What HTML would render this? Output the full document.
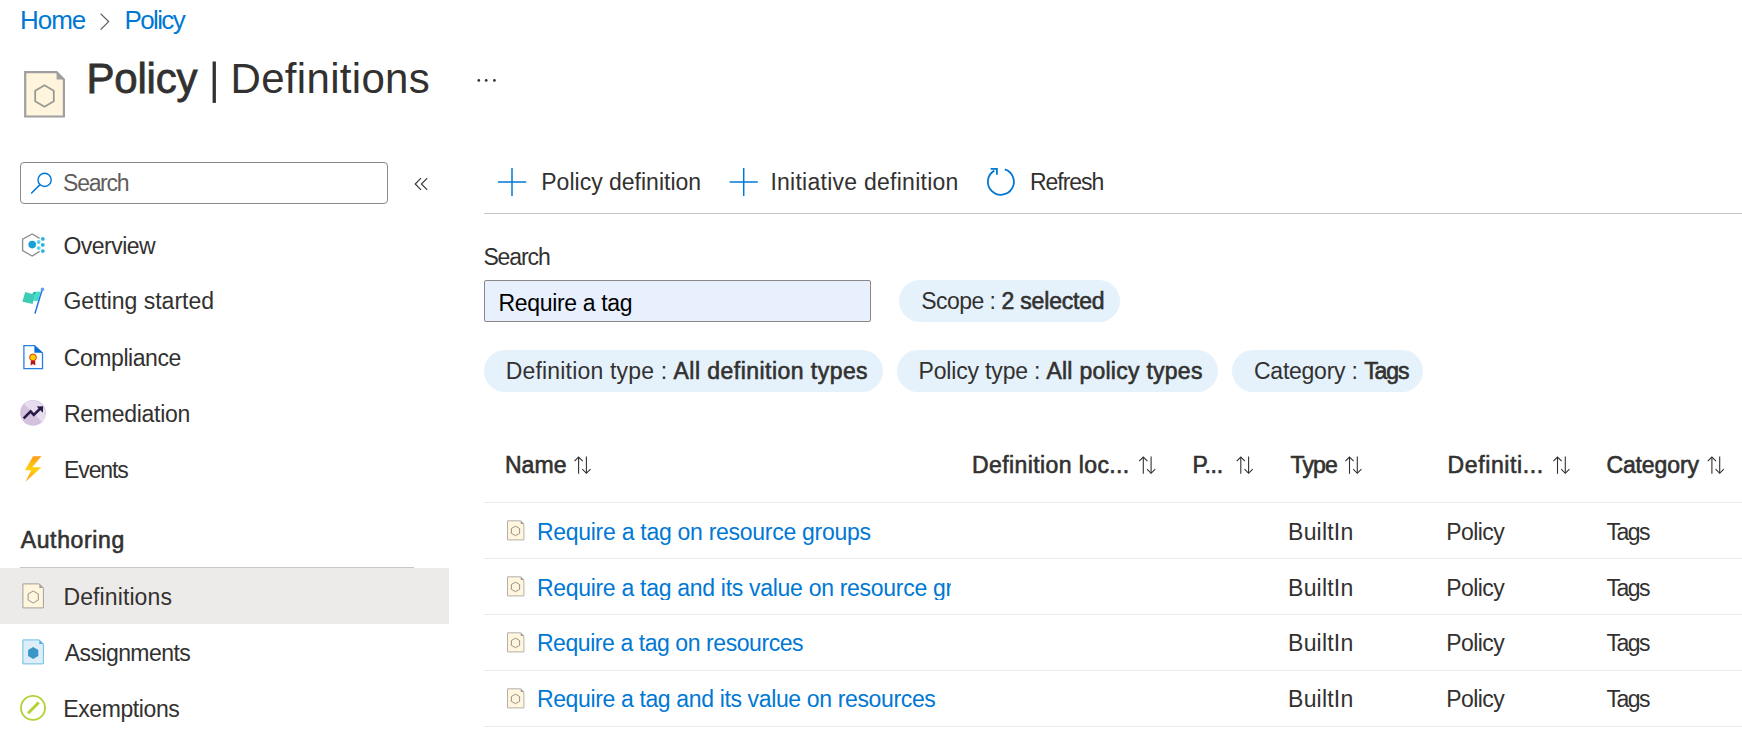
<!DOCTYPE html>
<html><head><meta charset="utf-8"><title>Policy | Definitions</title>
<style>
html,body{margin:0;padding:0;background:#fff;}
body{width:1742px;height:743px;position:relative;overflow:hidden;font-family:"Liberation Sans",sans-serif;}
.t{position:absolute;white-space:nowrap;line-height:1;}
.t b{font-weight:700;}
.a{position:absolute;}
svg{position:absolute;overflow:visible;}
</style></head>
<body>
<!-- breadcrumb chevron -->
<svg style="left:0;top:0" width="1" height="1"><polyline points="100.6,13.6 108.6,21.6 100.6,29.6" fill="none" stroke="#605e5c" stroke-width="1.3"/></svg>
<!-- title pipe + ellipsis -->
<svg style="left:0;top:0" width="1" height="1">
<rect x="212.6" y="61.5" width="3.3" height="41.4" fill="#323130"/>
<circle cx="478.8" cy="80.4" r="1.35" fill="#323130"/><circle cx="486.2" cy="80.4" r="1.35" fill="#323130"/><circle cx="494.4" cy="80.4" r="1.35" fill="#323130"/>
</svg>
<!-- title icon -->
<svg style="left:0;top:0" width="1" height="1">
<path d="M25.2,72.2 H56.6 L63.9,79.5 V116.5 H25.2 Z" fill="#fff5dc" stroke="#9f9f9f" stroke-width="2.2"/>
<path d="M56.6,72.2 L63.9,79.5 H56.6 Z" fill="#9f9f9f"/>
<polygon points="44.5,85.3 53.8,90.7 53.8,101.3 44.5,106.7 35.2,101.3 35.2,90.7" fill="none" stroke="#999896" stroke-width="1.8"/>
</svg>
<!-- sidebar search -->
<div class="a" style="left:20px;top:162px;width:366px;height:40px;border:1px solid #8a8886;border-radius:4px;"></div>
<svg style="left:0;top:0" width="1" height="1">
<circle cx="44.6" cy="179.9" r="6.6" fill="none" stroke="#0078d4" stroke-width="1.4"/>
<line x1="40" y1="184.6" x2="31.6" y2="193" stroke="#0078d4" stroke-width="1.5" stroke-linecap="round"/>
<polyline points="421,178.2 415.2,184 421,189.8" fill="none" stroke="#323130" stroke-width="1.1"/>
<polyline points="427.2,178.2 421.4,184 427.2,189.8" fill="none" stroke="#323130" stroke-width="1.1"/>
</svg>
<!-- selected nav bg + authoring line -->
<div class="a" style="left:0;top:568px;width:449px;height:56px;background:#edebe9"></div>
<div class="a" style="left:20px;top:567px;width:394px;height:1px;background:#c8c6c4"></div>
<!-- overview icon -->
<svg style="left:0;top:0" width="1" height="1">
<polyline points="39.6,238.4 32.2,234 22.6,239.1 22.6,250.6 32.2,256 39.6,251.4" fill="none" stroke="#8f8f8f" stroke-width="1.4"/>
<circle cx="32.2" cy="244.6" r="3.8" fill="#1a9fd6"/>
<circle cx="38.7" cy="242" r="1.9" fill="#50d6f2"/><circle cx="38.7" cy="248.1" r="1.9" fill="#50d6f2"/>
<circle cx="42.8" cy="238.9" r="1.9" fill="#2bb3da"/><circle cx="42.8" cy="244.9" r="1.9" fill="#2bb3da"/><circle cx="42.8" cy="251.1" r="1.9" fill="#2bb3da"/>
</svg>
<!-- getting started flag -->
<svg style="left:0;top:0" width="1" height="1">
<polygon points="32.6,292.4 35.2,291.7 40.6,291.6 38.3,300.9 32.4,300.7" fill="#46dcc6"/>
<polygon points="25.2,292.0 34.1,294.5 32.7,304.0 22.4,301.7" fill="#3ccbb5"/>
<polygon points="33.2,293.9 34.6,292.0 35.6,292.0 34.1,294.6" fill="#2a7d72"/>
<line x1="34.9" y1="313.6" x2="42.2" y2="289.6" stroke="#1f72e0" stroke-width="1.5"/>
<circle cx="42.4" cy="289.4" r="1.8" fill="#5ea3f0"/>
</svg>
<!-- compliance icon -->
<svg style="left:0;top:0" width="1" height="1">
<path d="M23.9,345.6 H34.6 L42.5,353 V368.6 H23.9 Z" fill="#fff" stroke="#2b7de0" stroke-width="1.3"/>
<path d="M34.4,345.4 V352.8 H42.6 Z" fill="#0a6fd6"/>
<path d="M31,359.2 L30.6,365.6 L33,364 L35.4,365.6 L35,359.2 Z" fill="#b01818"/>
<circle cx="33" cy="357.4" r="3.4" fill="#f5d000" stroke="#e8301c" stroke-width="1"/>
</svg>
<!-- remediation icon -->
<svg style="left:0;top:0" width="1" height="1">
<circle cx="33" cy="412.8" r="12.9" fill="#d4c1dd"/>
<path d="M23.9,403.7 A12.9,12.9 0 0 1 42.1,421.9 Z" fill="#e7ddee"/>
<polyline points="23.7,418.4 30.6,411.3 33.8,414.9 39.8,409" fill="none" stroke="#2b1a47" stroke-width="2.6"/>
<polygon points="36.6,406.4 43.1,406.2 42.9,412.7" fill="#2b1a47"/>
</svg>
<!-- events icon -->
<svg style="left:0;top:0" width="1" height="1">
<defs><linearGradient id="gl" x1="0" y1="0" x2="0" y2="1"><stop offset="0" stop-color="#ff9c1a"/><stop offset="0.5" stop-color="#ffd20a"/><stop offset="1" stop-color="#ff9a12"/></linearGradient></defs>
<polygon points="33,456.2 41.4,456.2 32.2,467.2 41.4,467.2 25.5,481.8 31.2,470.2 25,470.2" fill="url(#gl)"/>
</svg>
<!-- definitions nav icon -->
<svg style="left:0;top:0" width="1" height="1">
<path d="M22.9,583.9 H39.3 L43.4,588 V607.9 H22.9 Z" fill="#fff6dd" stroke="#a19f9d" stroke-width="1"/>
<path d="M39.3,583.9 L43.4,588 H39.3 Z" fill="#a19f9d"/>
<polygon points="33.2,591 38.3,594 38.3,600 33.2,603 28.1,600 28.1,594" fill="none" stroke="#8a8886" stroke-width="0.9"/>
</svg>
<!-- assignments icon -->
<svg style="left:0;top:0" width="1" height="1">
<path d="M22.9,639.9 H39.3 L43.4,644 V663.9 H22.9 Z" fill="#ddeef8" stroke="#6bbde2" stroke-width="1"/>
<path d="M39.3,639.9 L43.4,644 H39.3 Z" fill="#4fb0de"/>
<polygon points="33.2,647 38.3,650 38.3,656 33.2,659 28.1,656 28.1,650" fill="#3a96c8"/>
</svg>
<!-- exemptions icon -->
<svg style="left:0;top:0" width="1" height="1">
<circle cx="33" cy="707.9" r="12.0" fill="none" stroke="#b2d235" stroke-width="1.8"/>
<line x1="28.1" y1="713.3" x2="38.7" y2="702.5" stroke="#b2d235" stroke-width="3"/>
</svg>
<!-- toolbar icons -->
<svg style="left:0;top:0" width="1" height="1">
<line x1="497.9" y1="182" x2="526.2" y2="182" stroke="#0078d4" stroke-width="1.5"/>
<line x1="512" y1="168" x2="512" y2="196" stroke="#0078d4" stroke-width="1.5"/>
<line x1="729.6" y1="182" x2="757.8" y2="182" stroke="#0078d4" stroke-width="1.5"/>
<line x1="743.7" y1="168" x2="743.7" y2="196" stroke="#0078d4" stroke-width="1.5"/>
<path d="M1004.8,169.4 A13,13 0 1 1 994.3,170.6" fill="none" stroke="#0078d4" stroke-width="1.8"/>
<polyline points="990.6,168.8 996.9,168.8 996.9,174.8" fill="none" stroke="#0078d4" stroke-width="1.8"/>
</svg>
<div class="a" style="left:484px;top:213px;width:1258px;height:1px;background:#c8c6c4"></div>
<!-- search input + pills -->
<div class="a" style="left:484px;top:280px;width:385px;height:40px;background:#e8f0fe;border:1px solid #8a8886;border-radius:2px;"></div>
<div class="a" style="left:899px;top:280px;width:221px;height:42px;background:#e5f1fb;border-radius:21px;"></div>
<div class="a" style="left:484px;top:350px;width:399px;height:42px;background:#e5f1fb;border-radius:21px;"></div>
<div class="a" style="left:897px;top:350px;width:321px;height:42px;background:#e5f1fb;border-radius:21px;"></div>
<div class="a" style="left:1232px;top:350px;width:191px;height:42px;background:#e5f1fb;border-radius:21px;"></div>
<!-- table lines -->
<div class="a" style="left:484px;top:502px;width:1258px;height:1px;background:#edebe9"></div>
<div class="a" style="left:484px;top:558px;width:1258px;height:1px;background:#edebe9"></div>
<div class="a" style="left:484px;top:614px;width:1258px;height:1px;background:#edebe9"></div>
<div class="a" style="left:484px;top:670px;width:1258px;height:1px;background:#edebe9"></div>
<div class="a" style="left:484px;top:726px;width:1258px;height:1px;background:#edebe9"></div>
<!-- sort icons -->
<svg style="left:0;top:0" width="1" height="1">
<g transform="translate(574.1,456.2)" fill="none" stroke="#323130" stroke-width="1.1"><line x1="4.5" y1="0.8" x2="4.5" y2="17.6"/><polyline points="0.4,4.9 4.5,0.8 8.6,4.9"/><line x1="12.3" y1="0.2" x2="12.3" y2="17"/><polyline points="8.2,13 12.3,17.1 16.4,13"/></g>
<g transform="translate(1138.8,456.2)" fill="none" stroke="#323130" stroke-width="1.1"><line x1="4.5" y1="0.8" x2="4.5" y2="17.6"/><polyline points="0.4,4.9 4.5,0.8 8.6,4.9"/><line x1="12.3" y1="0.2" x2="12.3" y2="17"/><polyline points="8.2,13 12.3,17.1 16.4,13"/></g>
<g transform="translate(1236.3,456.2)" fill="none" stroke="#323130" stroke-width="1.1"><line x1="4.5" y1="0.8" x2="4.5" y2="17.6"/><polyline points="0.4,4.9 4.5,0.8 8.6,4.9"/><line x1="12.3" y1="0.2" x2="12.3" y2="17"/><polyline points="8.2,13 12.3,17.1 16.4,13"/></g>
<g transform="translate(1345,456.2)" fill="none" stroke="#323130" stroke-width="1.1"><line x1="4.5" y1="0.8" x2="4.5" y2="17.6"/><polyline points="0.4,4.9 4.5,0.8 8.6,4.9"/><line x1="12.3" y1="0.2" x2="12.3" y2="17"/><polyline points="8.2,13 12.3,17.1 16.4,13"/></g>
<g transform="translate(1553,456.2)" fill="none" stroke="#323130" stroke-width="1.1"><line x1="4.5" y1="0.8" x2="4.5" y2="17.6"/><polyline points="0.4,4.9 4.5,0.8 8.6,4.9"/><line x1="12.3" y1="0.2" x2="12.3" y2="17"/><polyline points="8.2,13 12.3,17.1 16.4,13"/></g>
<g transform="translate(1707.4,456.2)" fill="none" stroke="#323130" stroke-width="1.1"><line x1="4.5" y1="0.8" x2="4.5" y2="17.6"/><polyline points="0.4,4.9 4.5,0.8 8.6,4.9"/><line x1="12.3" y1="0.2" x2="12.3" y2="17"/><polyline points="8.2,13 12.3,17.1 16.4,13"/></g>
</svg>
<!-- row icons -->
<svg style="left:0;top:0" width="1" height="1">
<g transform="translate(0,0)"><path d="M507.5,520.8 H520.7 L523.9,524 V539.9 H507.5 Z" fill="#fff6dd" stroke="#b3b0ad" stroke-width="1"/><path d="M520.7,520.8 L523.9,524 H520.7 Z" fill="#a19f9d"/><polygon points="515.5,526.1 519.6,528.5 519.6,533.3 515.5,535.7 511.4,533.3 511.4,528.5" fill="none" stroke="#8a8886" stroke-width="0.9"/></g>
<g transform="translate(0,56)"><path d="M507.5,520.8 H520.7 L523.9,524 V539.9 H507.5 Z" fill="#fff6dd" stroke="#b3b0ad" stroke-width="1"/><path d="M520.7,520.8 L523.9,524 H520.7 Z" fill="#a19f9d"/><polygon points="515.5,526.1 519.6,528.5 519.6,533.3 515.5,535.7 511.4,533.3 511.4,528.5" fill="none" stroke="#8a8886" stroke-width="0.9"/></g>
<g transform="translate(0,112)"><path d="M507.5,520.8 H520.7 L523.9,524 V539.9 H507.5 Z" fill="#fff6dd" stroke="#b3b0ad" stroke-width="1"/><path d="M520.7,520.8 L523.9,524 H520.7 Z" fill="#a19f9d"/><polygon points="515.5,526.1 519.6,528.5 519.6,533.3 515.5,535.7 511.4,533.3 511.4,528.5" fill="none" stroke="#8a8886" stroke-width="0.9"/></g>
<g transform="translate(0,168)"><path d="M507.5,520.8 H520.7 L523.9,524 V539.9 H507.5 Z" fill="#fff6dd" stroke="#b3b0ad" stroke-width="1"/><path d="M520.7,520.8 L523.9,524 H520.7 Z" fill="#a19f9d"/><polygon points="515.5,526.1 519.6,528.5 519.6,533.3 515.5,535.7 511.4,533.3 511.4,528.5" fill="none" stroke="#8a8886" stroke-width="0.9"/></g>
</svg>

<div id="bc_home" class="t" style="left:20.10px;top:7.30px;font-size:26px;letter-spacing:-1.097px;color:#0078d4;">Home</div>
<div id="bc_policy" class="t" style="left:124.60px;top:7.30px;font-size:26px;letter-spacing:-1.660px;color:#0078d4;">Policy</div>
<div id="ti_policy" class="t" style="left:86.39px;top:57.80px;font-size:42px;letter-spacing:-0.180px;color:#323130;-webkit-text-stroke:0.80px currentColor;">Policy</div>
<div id="ti_defs" class="t" style="left:230.50px;top:58.20px;font-size:42px;letter-spacing:0.320px;color:#323130;">Definitions</div>
<div id="sb_search" class="t" style="left:63.10px;top:172.00px;font-size:23px;letter-spacing:-1.300px;color:#605e5c;">Search</div>
<div id="nv_overview" class="t" style="left:63.39px;top:234.80px;font-size:23px;letter-spacing:-0.500px;color:#323130;">Overview</div>
<div id="nv_getting" class="t" style="left:63.39px;top:290.40px;font-size:23px;letter-spacing:-0.019px;color:#323130;">Getting started</div>
<div id="nv_compliance" class="t" style="left:63.79px;top:346.50px;font-size:23px;letter-spacing:-0.435px;color:#323130;">Compliance</div>
<div id="nv_remediation" class="t" style="left:64.00px;top:402.50px;font-size:23px;letter-spacing:-0.280px;color:#323130;">Remediation</div>
<div id="nv_events" class="t" style="left:64.00px;top:458.50px;font-size:23px;letter-spacing:-1.100px;color:#323130;">Events</div>
<div id="nv_authoring" class="t" style="left:20.69px;top:529.00px;font-size:23px;letter-spacing:0.650px;color:#323130;-webkit-text-stroke:0.60px currentColor;">Authoring</div>
<div id="nv_definitions" class="t" style="left:63.50px;top:585.80px;font-size:23px;letter-spacing:0.100px;color:#323130;">Definitions</div>
<div id="nv_assignments" class="t" style="left:64.69px;top:641.90px;font-size:23px;letter-spacing:-0.560px;color:#323130;">Assignments</div>
<div id="nv_exemptions" class="t" style="left:63.29px;top:698.00px;font-size:23px;letter-spacing:-0.408px;color:#323130;">Exemptions</div>
<div id="tb_poldef" class="t" style="left:541.29px;top:171.10px;font-size:23px;letter-spacing:0.000px;color:#323130;">Policy definition</div>
<div id="tb_initdef" class="t" style="left:770.39px;top:171.10px;font-size:23px;letter-spacing:0.260px;color:#323130;">Initiative definition</div>
<div id="tb_refresh" class="t" style="left:1030.00px;top:171.10px;font-size:23px;letter-spacing:-1.032px;color:#323130;">Refresh</div>
<div id="lb_search" class="t" style="left:483.39px;top:245.90px;font-size:23px;letter-spacing:-1.100px;color:#323130;">Search</div>
<div id="in_text" class="t" style="left:498.60px;top:292.00px;font-size:23px;letter-spacing:-0.351px;color:#000000;">Require a tag</div>
<div id="pl_scope_a" class="t" style="left:921.19px;top:290.10px;font-size:23px;letter-spacing:-0.537px;color:#323130;">Scope :</div>
<div id="pl_scope_b" class="t" style="left:1001.50px;top:290.10px;font-size:23px;letter-spacing:-0.187px;color:#323130;-webkit-text-stroke:0.60px currentColor;">2 selected</div>
<div id="pl_deftype_a" class="t" style="left:505.69px;top:360.00px;font-size:23px;letter-spacing:0.188px;color:#323130;">Definition type :</div>
<div id="pl_deftype_b" class="t" style="left:673.59px;top:360.00px;font-size:23px;letter-spacing:0.456px;color:#323130;-webkit-text-stroke:0.60px currentColor;">All definition types</div>
<div id="pl_poltype_a" class="t" style="left:918.50px;top:360.00px;font-size:23px;letter-spacing:-0.166px;color:#323130;">Policy type :</div>
<div id="pl_poltype_b" class="t" style="left:1046.40px;top:360.00px;font-size:23px;letter-spacing:0.261px;color:#323130;-webkit-text-stroke:0.60px currentColor;">All policy types</div>
<div id="pl_cat_a" class="t" style="left:1254.00px;top:360.00px;font-size:23px;letter-spacing:-0.252px;color:#323130;">Category :</div>
<div id="pl_cat_b" class="t" style="left:1364.19px;top:360.00px;font-size:23px;letter-spacing:-1.103px;color:#323130;-webkit-text-stroke:0.60px currentColor;">Tags</div>
<div id="th_name" class="t" style="left:504.89px;top:453.70px;font-size:23px;letter-spacing:0.097px;color:#323130;-webkit-text-stroke:0.60px currentColor;">Name</div>
<div id="th_defloc" class="t" style="left:972.10px;top:453.70px;font-size:23px;letter-spacing:0.394px;color:#323130;-webkit-text-stroke:0.60px currentColor;">Definition loc...</div>
<div id="th_p" class="t" style="left:1192.39px;top:453.70px;font-size:23px;letter-spacing:-0.301px;color:#323130;-webkit-text-stroke:0.60px currentColor;">P...</div>
<div id="th_type" class="t" style="left:1290.50px;top:453.70px;font-size:23px;letter-spacing:-0.833px;color:#323130;-webkit-text-stroke:0.60px currentColor;">Type</div>
<div id="th_defin" class="t" style="left:1447.50px;top:453.70px;font-size:23px;letter-spacing:0.620px;color:#323130;-webkit-text-stroke:0.60px currentColor;">Definiti...</div>
<div id="th_cat" class="t" style="left:1606.39px;top:453.70px;font-size:23px;letter-spacing:-0.104px;color:#323130;-webkit-text-stroke:0.60px currentColor;">Category</div>
<div id="r1_link" class="t" style="left:536.89px;top:520.90px;font-size:23px;letter-spacing:-0.273px;color:#0078d4;">Require a tag on resource groups</div>
<div id="r2_link" class="t" style="left:536.89px;top:576.50px;font-size:23px;letter-spacing:-0.294px;color:#0078d4;width:413.91px;overflow:hidden;">Require a tag and its value on resource groups</div>
<div id="r3_link" class="t" style="left:536.89px;top:632.40px;font-size:23px;letter-spacing:-0.428px;color:#0078d4;">Require a tag on resources</div>
<div id="r4_link" class="t" style="left:536.89px;top:688.00px;font-size:23px;letter-spacing:-0.359px;color:#0078d4;">Require a tag and its value on resources</div>
<div id="r1_type" class="t" style="left:1288.10px;top:520.90px;font-size:23px;letter-spacing:0.197px;color:#323130;">BuiltIn</div>
<div id="r1_def" class="t" style="left:1446.29px;top:520.90px;font-size:23px;letter-spacing:-0.580px;color:#323130;">Policy</div>
<div id="r1_cat" class="t" style="left:1606.50px;top:520.90px;font-size:23px;letter-spacing:-1.500px;color:#323130;">Tags</div>
<div id="r2_type" class="t" style="left:1288.10px;top:576.50px;font-size:23px;letter-spacing:0.197px;color:#323130;">BuiltIn</div>
<div id="r2_def" class="t" style="left:1446.29px;top:576.50px;font-size:23px;letter-spacing:-0.580px;color:#323130;">Policy</div>
<div id="r2_cat" class="t" style="left:1606.50px;top:576.50px;font-size:23px;letter-spacing:-1.500px;color:#323130;">Tags</div>
<div id="r3_type" class="t" style="left:1288.10px;top:632.40px;font-size:23px;letter-spacing:0.197px;color:#323130;">BuiltIn</div>
<div id="r3_def" class="t" style="left:1446.29px;top:632.40px;font-size:23px;letter-spacing:-0.580px;color:#323130;">Policy</div>
<div id="r3_cat" class="t" style="left:1606.50px;top:632.40px;font-size:23px;letter-spacing:-1.500px;color:#323130;">Tags</div>
<div id="r4_type" class="t" style="left:1288.10px;top:688.00px;font-size:23px;letter-spacing:0.197px;color:#323130;">BuiltIn</div>
<div id="r4_def" class="t" style="left:1446.29px;top:688.00px;font-size:23px;letter-spacing:-0.580px;color:#323130;">Policy</div>
<div id="r4_cat" class="t" style="left:1606.50px;top:688.00px;font-size:23px;letter-spacing:-1.500px;color:#323130;">Tags</div>
</body></html>
